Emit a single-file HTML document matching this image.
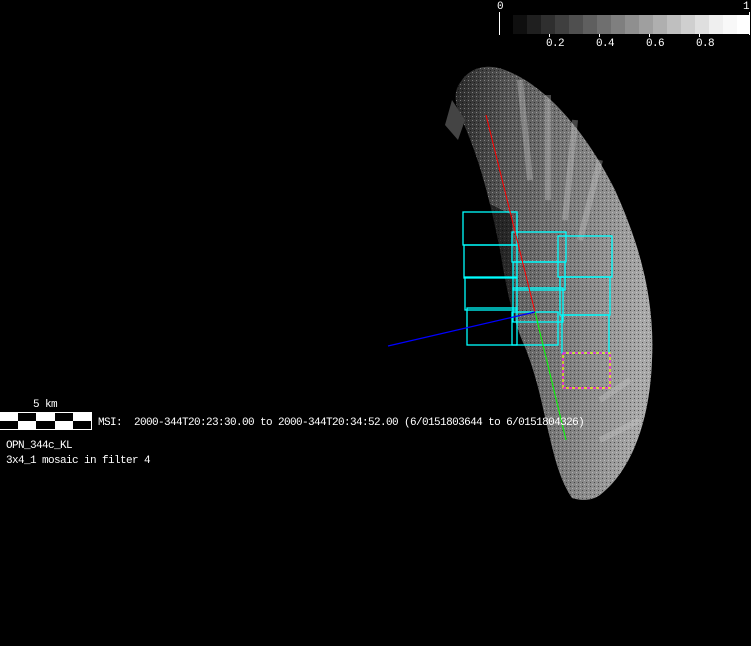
<!DOCTYPE html>
<html><head><meta charset="utf-8"><style>
html,body{margin:0;padding:0;background:#000;width:751px;height:646px;overflow:hidden}
.t{position:absolute;font-family:"Liberation Mono",monospace;font-size:11px;letter-spacing:-0.6px;color:#fff;white-space:pre;line-height:12px}
</style></head><body>
<svg width="751" height="646" style="position:absolute;left:0;top:0">
<defs>
<linearGradient id="g" x1="0" y1="0" x2="1" y2="0.1">
<stop offset="0" stop-color="#2a2a2a"/>
<stop offset="0.3" stop-color="#5a5a5a"/>
<stop offset="0.65" stop-color="#808080"/>
<stop offset="1" stop-color="#a8a8a8"/>
</linearGradient>
<pattern id="p" width="4" height="4" patternUnits="userSpaceOnUse">
<rect x="0" y="0" width="1" height="1" fill="#fff" opacity="0.35"/><rect x="2" y="2" width="1" height="1" fill="#000" opacity="0.5"/>
</pattern>
</defs>
<path id="s" d="M462,80 C472,66 490,64 505,70 C545,85 585,130 615,190 C640,245 655,300 652,360 C650,420 632,470 600,495 C590,502 578,500 572,498 C560,480 555,460 548,430 C540,395 535,370 522,340 C510,310 505,280 500,250 C490,200 480,160 462,120 C455,105 452,92 462,80 Z" fill="url(#g)"/>
<path d="M462,80 C472,66 490,64 505,70 C545,85 585,130 615,190 C640,245 655,300 652,360 C650,420 632,470 600,495 C590,502 578,500 572,498 C560,480 555,460 548,430 C540,395 535,370 522,340 C510,310 505,280 500,250 C490,200 480,160 462,120 C455,105 452,92 462,80 Z" fill="url(#p)"/>
<g stroke="#c8c8c8" stroke-width="6" opacity="0.35">
<line x1="520" y1="80" x2="530" y2="180"/><line x1="548" y1="95" x2="548" y2="200"/>
<line x1="575" y1="120" x2="565" y2="220"/><line x1="600" y1="160" x2="580" y2="240"/>
<line x1="630" y1="380" x2="600" y2="400"/><line x1="640" y1="420" x2="600" y2="440"/>
</g>
<path d="M482,200 L512,215 L516,340 L505,330 Z" fill="#000" opacity="0.55"/>
<path d="M452,100 L465,120 L458,140 L445,125 Z" fill="#444"/>
<g fill="none" stroke="#0ff" stroke-width="1.3">
<rect x="463" y="212" width="54" height="33"/><rect x="464" y="245" width="53" height="33"/>
<rect x="465" y="277" width="52" height="33"/><rect x="467" y="308" width="50" height="37"/>
<rect x="512" y="232" width="54" height="30"/><rect x="513" y="262" width="52" height="28"/>
<rect x="513" y="288" width="50" height="34"/><rect x="512" y="312" width="46" height="33"/>
<rect x="558" y="236" width="54" height="41"/><rect x="560" y="277" width="50" height="38"/>
<rect x="562" y="315" width="47" height="38"/>
</g>
<rect x="563" y="353" width="47" height="35" fill="none" stroke="#ff0" stroke-width="1.2"/>
<rect x="563" y="353" width="47" height="35" fill="none" stroke="#f0f" stroke-width="1.2" stroke-dasharray="3 3"/>
<line x1="486" y1="115" x2="535" y2="312" stroke="#f00" stroke-width="1"/>
<line x1="535" y1="312" x2="566" y2="440" stroke="#0f0" stroke-width="1"/>
<line x1="388" y1="346" x2="535" y2="312" stroke="#00f" stroke-width="1.3"/>
<line x1="499.5" y1="12" x2="499.5" y2="35" stroke="#fff"/>
<line x1="749.5" y1="12" x2="749.5" y2="35" stroke="#fff"/>
<g stroke="#fff"><line x1="549.5" y1="33" x2="549.5" y2="37"/><line x1="599.5" y1="33" x2="599.5" y2="37"/><line x1="649.5" y1="33" x2="649.5" y2="37"/><line x1="699.5" y1="33" x2="699.5" y2="37"/></g>
<g>
<rect x="513" y="15" width="14" height="19" fill="#0f0f0f"/><rect x="527" y="15" width="14" height="19" fill="#1f1f1f"/>
<rect x="541" y="15" width="14" height="19" fill="#2f2f2f"/><rect x="555" y="15" width="14" height="19" fill="#3f3f3f"/>
<rect x="569" y="15" width="14" height="19" fill="#4f4f4f"/><rect x="583" y="15" width="14" height="19" fill="#5f5f5f"/>
<rect x="597" y="15" width="14" height="19" fill="#6f6f6f"/><rect x="611" y="15" width="14" height="19" fill="#7f7f7f"/>
<rect x="625" y="15" width="14" height="19" fill="#8f8f8f"/><rect x="639" y="15" width="14" height="19" fill="#9f9f9f"/>
<rect x="653" y="15" width="14" height="19" fill="#afafaf"/><rect x="667" y="15" width="14" height="19" fill="#bfbfbf"/>
<rect x="681" y="15" width="14" height="19" fill="#cfcfcf"/><rect x="695" y="15" width="14" height="19" fill="#dfdfdf"/>
<rect x="709" y="15" width="14" height="19" fill="#efefef"/><rect x="723" y="15" width="14" height="19" fill="#f8f8f8"/>
<rect x="737" y="15" width="12" height="19" fill="#fff"/>
</g>
<rect x="0" y="412" width="92" height="18" fill="#fff"/>
<g fill="#000">
<rect x="18" y="413" width="18" height="8"/><rect x="55" y="413" width="18" height="8"/>
<rect x="0" y="421" width="18" height="8"/><rect x="36" y="421" width="19" height="8"/><rect x="73" y="421" width="18" height="8"/>
</g>
</svg>
<div class="t" style="left:497px;top:1px">0</div>
<div class="t" style="left:743px;top:1px">1</div>
<div class="t" style="left:546px;top:38px">0.2</div>
<div class="t" style="left:596px;top:38px">0.4</div>
<div class="t" style="left:646px;top:38px">0.6</div>
<div class="t" style="left:696px;top:38px">0.8</div>
<div class="t" style="left:33px;top:399px">5 km</div>
<div class="t" style="left:98px;top:417px">MSI:  2000-344T20:23:30.00 to 2000-344T20:34:52.00 (6/0151803644 to 6/0151804326)</div>
<div class="t" style="left:6px;top:440px">OPN_344c_KL</div>
<div class="t" style="left:6px;top:455px">3x4_1 mosaic in filter 4</div>
</body></html>
